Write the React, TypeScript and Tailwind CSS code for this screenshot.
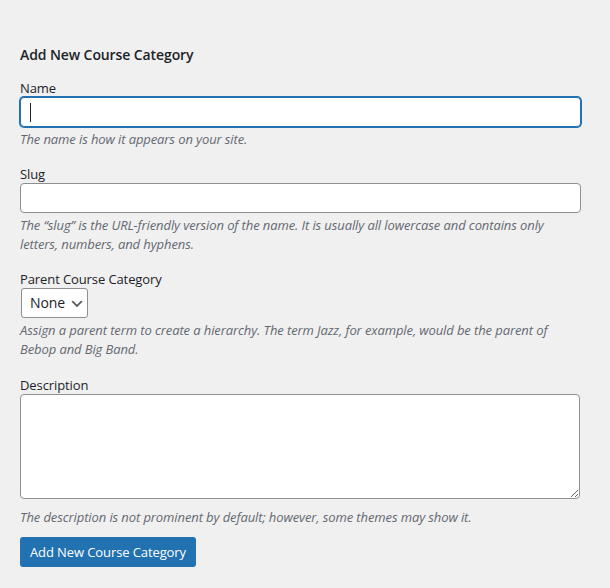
import React from "react";

const font = { fontFamily: '"Open Sans", "Noto Sans", sans-serif' };

export default function App() {
  return (
    <div
      className="min-h-[588px] w-[610px] bg-[#f0f0f1] pl-[20px] pt-[45px] text-[#1d2327] tracking-[-0.1px]"
      style={font}
    >
      <h2 className="text-[14px] font-semibold leading-[20px]">Add New Course Category</h2>

      <div className="mt-[14px]">
        <label className="block text-[13px] leading-[18px]">Name</label>
        <div className="relative h-[30px] w-[561px] rounded-[4px] border border-[#2271b1] bg-white shadow-[0_0_0_1px_#2271b1]">
          <div className="absolute left-[9px] top-[5px] h-[19px] w-px bg-[#1d2327]" />
        </div>
        <p className="mt-[3px] text-[13px] italic leading-[19.5px] text-[#646970]">
          The name is how it appears on your site.
        </p>
      </div>

      <div className="mt-[15px]">
        <label className="block text-[13px] leading-[18px]">Slug</label>
        <input
          type="text"
          className="block h-[30px] w-[561px] rounded-[4px] border border-[#8c8f94] bg-white px-2 text-[14px] outline-none"
        />
        <p className="mt-[3px] w-[561px] text-[13px] italic leading-[19.5px] text-[#646970]">
          The “slug” is the URL-friendly version of the name. It is usually all lowercase and contains only letters, numbers, and hyphens.
        </p>
      </div>

      <div className="mt-[15px]">
        <label className="block text-[13px] leading-[18px]">Parent Course Category</label>
        <div className="ml-px flex h-[30px] w-[67px] items-center rounded-[3px] border border-[#8c8f94] bg-white pl-[8px] text-[14px]">
          <span>None</span>
          <svg className="ml-[4px] mt-[2px]" width="16" height="16" viewBox="0 0 20 20">
            <path d="M5 6l5 5 5-5 2 1-7 7-7-7 2-1z" fill="#555" />
          </svg>
        </div>
        <p className="mt-[3px] w-[561px] text-[13px] italic leading-[19.5px] text-[#646970]">
          Assign a parent term to create a hierarchy. The term Jazz, for example, would be the parent of Bebop and Big Band.
        </p>
      </div>

      <div className="mt-[16px]">
        <label className="block text-[13px] leading-[18px]">Description</label>
        <textarea
          className="block h-[105px] w-[560px] resize-y rounded-[4px] border border-[#8c8f94] bg-white outline-none"
        />
        <p className="mt-[9px] text-[13px] italic leading-[19.5px] text-[#646970]">
          The description is not prominent by default; however, some themes may show it.
        </p>
      </div>

      <button className="mt-[10px] h-[30px] rounded-[3px] bg-[#2271b1] px-[10px] text-[13px] leading-[28px] text-white">
        Add New Course Category
      </button>
    </div>
  );
}
